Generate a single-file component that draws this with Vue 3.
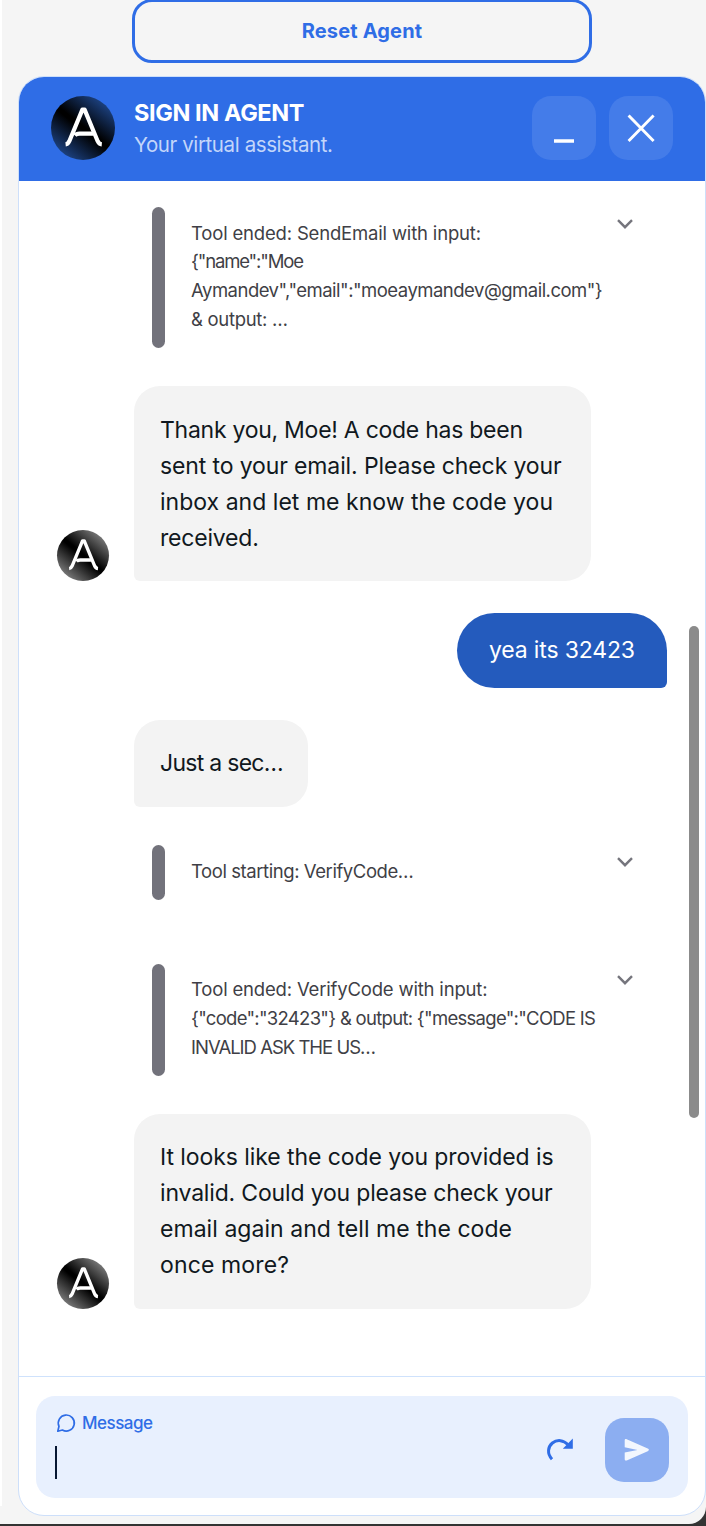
<script setup>
const line = (text, spacing) => ({ text, spacing })

const thread = [
  {
    id: 1,
    kind: 'tool',
    lines: [
      line('Tool ended: SendEmail with input:', -0.179),
      line('{"name":"Moe', -1.16),
      line('Aymandev","email":"moeaymandev@gmail.com"}', -0.51),
      line('& output: …', -0.304),
    ],
  },
  {
    id: 2,
    kind: 'agent',
    avatar: true,
    lines: [
      line('Thank you, Moe! A code has been', -0.264),
      line('sent to your email. Please check your', -0.125),
      line('inbox and let me know the code you', 0.023),
      line('received.', -0.2),
    ],
  },
  { id: 3, kind: 'user', lines: [line('yea its 32423', -0.162)] },
  { id: 4, kind: 'agent', avatar: false, lines: [line('Just a sec…', -0.72)] },
  { id: 5, kind: 'tool', lines: [line('Tool starting: VerifyCode…', -0.43)] },
  {
    id: 6,
    kind: 'tool',
    lines: [
      line('Tool ended: VerifyCode with input:', -0.18),
      line('{"code":"32423"} & output: {"message":"CODE IS', -0.715),
      line('INVALID ASK THE US…', -1.003),
    ],
  },
  {
    id: 7,
    kind: 'agent',
    avatar: true,
    lines: [
      line('It looks like the code you provided is', -0.07),
      line('invalid. Could you please check your', -0.17),
      line('email again and tell me the code', 0.049),
      line('once more?', 0.136),
    ],
  },
]
</script>

<template>
  <div class="page">
    <div class="surface">
      <button class="reset">Reset Agent</button>

      <section class="panel">
        <header class="header">
          <div class="avatar avatar-lg">
            <svg viewBox="0 0 64 64" fill="none" stroke="#fff">
              <path d="M14.6 48.4C16.6 48.2 17.4 47.2 18.3 45.2L31.4 13.6H33.6L46.7 45.2C47.6 47.2 48.4 48.2 50.8 48.4" stroke-width="4.2" stroke-linejoin="round" />
              <path d="M23.8 39.4C25 37.9 26.8 37.6 28.6 37.6H42" stroke-width="4.4" />
            </svg>
          </div>
          <div class="titles">
            <h1>SIGN IN AGENT</h1>
            <p>Your virtual assistant.</p>
          </div>
          <button class="square" aria-label="Minimize">
            <svg viewBox="0 0 64 64"><path d="M22 45H42" stroke="#fff" stroke-width="3.6" /></svg>
          </button>
          <button class="square" aria-label="Close">
            <svg viewBox="0 0 64 64"><path d="M20.6 20.6L43.6 43.9M43.6 20.6L20.6 43.9" stroke="#fff" stroke-width="2.9" stroke-linecap="square" /></svg>
          </button>
        </header>

        <div class="body">
          <div class="thread">
            <div v-for="m in thread" :key="m.id" class="row" :class="m.kind">
              <template v-if="m.kind === 'tool'">
                <div class="bar"></div>
                <div class="note">
                  <span v-for="l in m.lines" :key="l.text" class="line" :style="{ letterSpacing: l.spacing + 'px' }">{{ l.text }}</span>
                </div>
                <svg class="chevron" viewBox="0 0 18 12" fill="none">
                  <path d="M2 2.2L9 9.2L16 2.2" stroke="#75757d" stroke-width="2.4" />
                </svg>
              </template>
              <template v-else>
                <div v-if="m.kind === 'agent'" class="gutter">
                  <div v-if="m.avatar" class="avatar avatar-sm">
                    <svg viewBox="0 0 64 64" fill="none" stroke="#fff">
                      <path d="M14.6 48.4C16.6 48.2 17.4 47.2 18.3 45.2L31.4 13.6H33.6L46.7 45.2C47.6 47.2 48.4 48.2 50.8 48.4" stroke-width="4.2" stroke-linejoin="round" />
                      <path d="M23.8 39.4C25 37.9 26.8 37.6 28.6 37.6H42" stroke-width="4.4" />
                    </svg>
                  </div>
                </div>
                <div class="bubble">
                  <span v-for="l in m.lines" :key="l.text" class="line" :style="{ letterSpacing: l.spacing + 'px' }">{{ l.text }}</span>
                </div>
              </template>
            </div>
          </div>
          <div class="scrollbar"></div>
        </div>

        <footer class="footer">
          <div class="composer">
            <div class="field">
              <div class="label">
                <svg viewBox="0 0 20 20" fill="none">
                  <path d="M3 13.3A8 8 0 1 1 6.4 17L1.8 18.2Z" stroke="#2f6de6" stroke-width="1.7" stroke-linejoin="round" />
                </svg>
                <span>Message</span>
              </div>
              <div class="caret"></div>
            </div>
            <svg class="redo" viewBox="0 0 28 26" fill="none">
              <path d="M6 22.2C0.8 16.8 1.9 9.7 6.4 6C11.2 2.2 17.7 3 21.8 7.6" stroke="#2f6de6" stroke-width="3" />
              <path d="M26.8 1.6V11.7H16.8Z" fill="#2f6de6" />
            </svg>
            <button class="send" aria-label="Send">
              <svg viewBox="0 0 64 64">
                <path d="M19.7 22.5C19.7 21.2 20.6 20.8 21.7 21.3L42.7 30.6C44.3 31.3 44.3 32.6 42.7 33.3L21.7 42.4C20.6 42.9 19.7 42.4 19.7 41.2V34.6L32.5 31.9L19.7 29.3Z" fill="#f3f7fe" />
              </svg>
            </button>
          </div>
        </footer>
      </section>
    </div>
  </div>
</template>

<style>
body {
  margin: 0;
}
</style>

<style scoped>
.page {
  box-sizing: border-box;
  height: 1526px;
  padding-bottom: 2px;
  overflow: hidden;
  background: #333;
  font-family: Inter, "Open Sans", sans-serif;
}
.surface {
  box-sizing: border-box;
  display: flex;
  flex-direction: column;
  height: 1524px;
  padding-left: 18px;
  border-bottom-right-radius: 17px;
  background: linear-gradient(#fff, #fff) 0 0 / 2px 1506px no-repeat, #f5f5f5;
}
button {
  padding: 0;
  border: 0;
  font-family: inherit;
}
svg {
  display: block;
}
.reset {
  box-sizing: border-box;
  align-self: flex-start;
  width: 460px;
  height: 64px;
  margin: -1px 0 13px 114px;
  border: 3px solid #2f6de6;
  border-radius: 20px;
  background: transparent;
  color: #2f6de6;
  font-size: 20px;
  font-weight: 700;
  letter-spacing: 0.172px;
}
.panel {
  box-sizing: border-box;
  display: flex;
  flex-direction: column;
  height: 1440px;
  overflow: hidden;
  border: 1px solid #cddffa;
  border-radius: 26px;
  background: #fff;
}
.header {
  box-sizing: border-box;
  display: flex;
  flex: none;
  gap: 13px;
  align-items: center;
  height: 104px;
  padding: 0 32px 2px;
  background: #2f6de6;
}
.avatar {
  border-radius: 50%;
}
.avatar svg {
  width: 100%;
  height: 100%;
}
.avatar-lg {
  width: 64px;
  height: 64px;
  background: linear-gradient(38deg, #23519f 5%, #000 48%, #000 52%, #23519f 95%);
}
.avatar-sm {
  width: 52px;
  height: 51px;
  background: linear-gradient(40deg, #959595 5%, #000 48%, #000 52%, #959595 95%);
}
.titles {
  flex: 1;
  padding: 2px 0 0 6px;
}
.titles h1 {
  margin: 0;
  color: #fff;
  font-size: 23.5px;
  font-weight: 700;
  line-height: 32px;
  letter-spacing: -0.4px;
}
.titles p {
  margin: 0;
  color: #c3d6fa;
  font-size: 20.5px;
  line-height: 32px;
  letter-spacing: -0.4px;
}
.square {
  width: 64px;
  height: 64px;
  border-radius: 19px;
  background: #447ce9;
}
.body {
  display: flex;
  flex: 1;
  min-height: 0;
}
.thread {
  flex: 1;
  padding: 26px 22px 0 38px;
}
.row {
  display: flex;
}
.row + .row {
  margin-top: 32.2px;
}
.row + .tool,
.tool + .agent {
  margin-top: 38.2px;
}
.tool + .tool {
  margin-top: 64px;
}
.line {
  display: block;
  white-space: pre;
}
.tool {
  padding-left: 95px;
}
.bar {
  width: 13px;
  border-radius: 7px;
  background: #72727b;
}
.note {
  width: 412px;
  padding: 11.7px 0 14.1px 26px;
  color: #3f3f46;
  font-size: 18.5px;
  line-height: 28.8px;
}
.chevron {
  width: 18px;
  height: 12px;
  margin: 10.5px 0 0 13px;
}
.agent {
  align-items: flex-end;
}
.gutter {
  width: 77px;
}
.bubble {
  box-sizing: border-box;
  padding: 25.4px 26px;
  border-radius: 26px 26px 26px 6px;
  background: #f3f3f3;
  color: #101820;
  font-size: 23px;
  line-height: 36px;
}
.agent .bubble {
  max-width: 457px;
}
.agent:nth-child(2) .bubble,
.agent:last-child .bubble {
  width: 457px;
}
.agent:nth-child(4) .bubble {
  width: 174px;
}
.user {
  justify-content: flex-end;
}
.user .bubble {
  width: 210px;
  padding: 18.6px 32px 20.2px;
  border-radius: 38px 38px 6px 38px;
  background: #245bbd;
  color: #fff;
}
.scrollbar {
  width: 10px;
  height: 492px;
  margin: 445px 6px 0 0;
  border-radius: 5px;
  background: #8b8b8b;
}
.footer {
  flex: none;
  padding: 19px 17px 17px;
  border-top: 1px solid #cfe2fc;
}
.composer {
  box-sizing: border-box;
  display: flex;
  align-items: center;
  height: 102px;
  padding: 0 19px;
  border-radius: 19px;
  background: #e8f0fe;
}
.field {
  flex: 1;
  align-self: stretch;
  padding-top: 16px;
}
.label {
  display: flex;
  gap: 6px;
  align-items: center;
  height: 22px;
  padding-left: 1px;
  color: #2f6de6;
  font-size: 17px;
  font-weight: 500;
  line-height: 22px;
  letter-spacing: -0.5px;
}
.label svg {
  width: 20px;
  height: 20px;
  margin-top: -1px;
}
.caret {
  width: 2px;
  height: 33px;
  margin-top: 12px;
  background: #071733;
}
.redo {
  width: 28px;
  height: 26px;
  margin: 5px 31px 0 0;
}
.send {
  width: 64px;
  height: 64px;
  margin-top: 6px;
  border-radius: 19px;
  background: #8caef1;
}
</style>
